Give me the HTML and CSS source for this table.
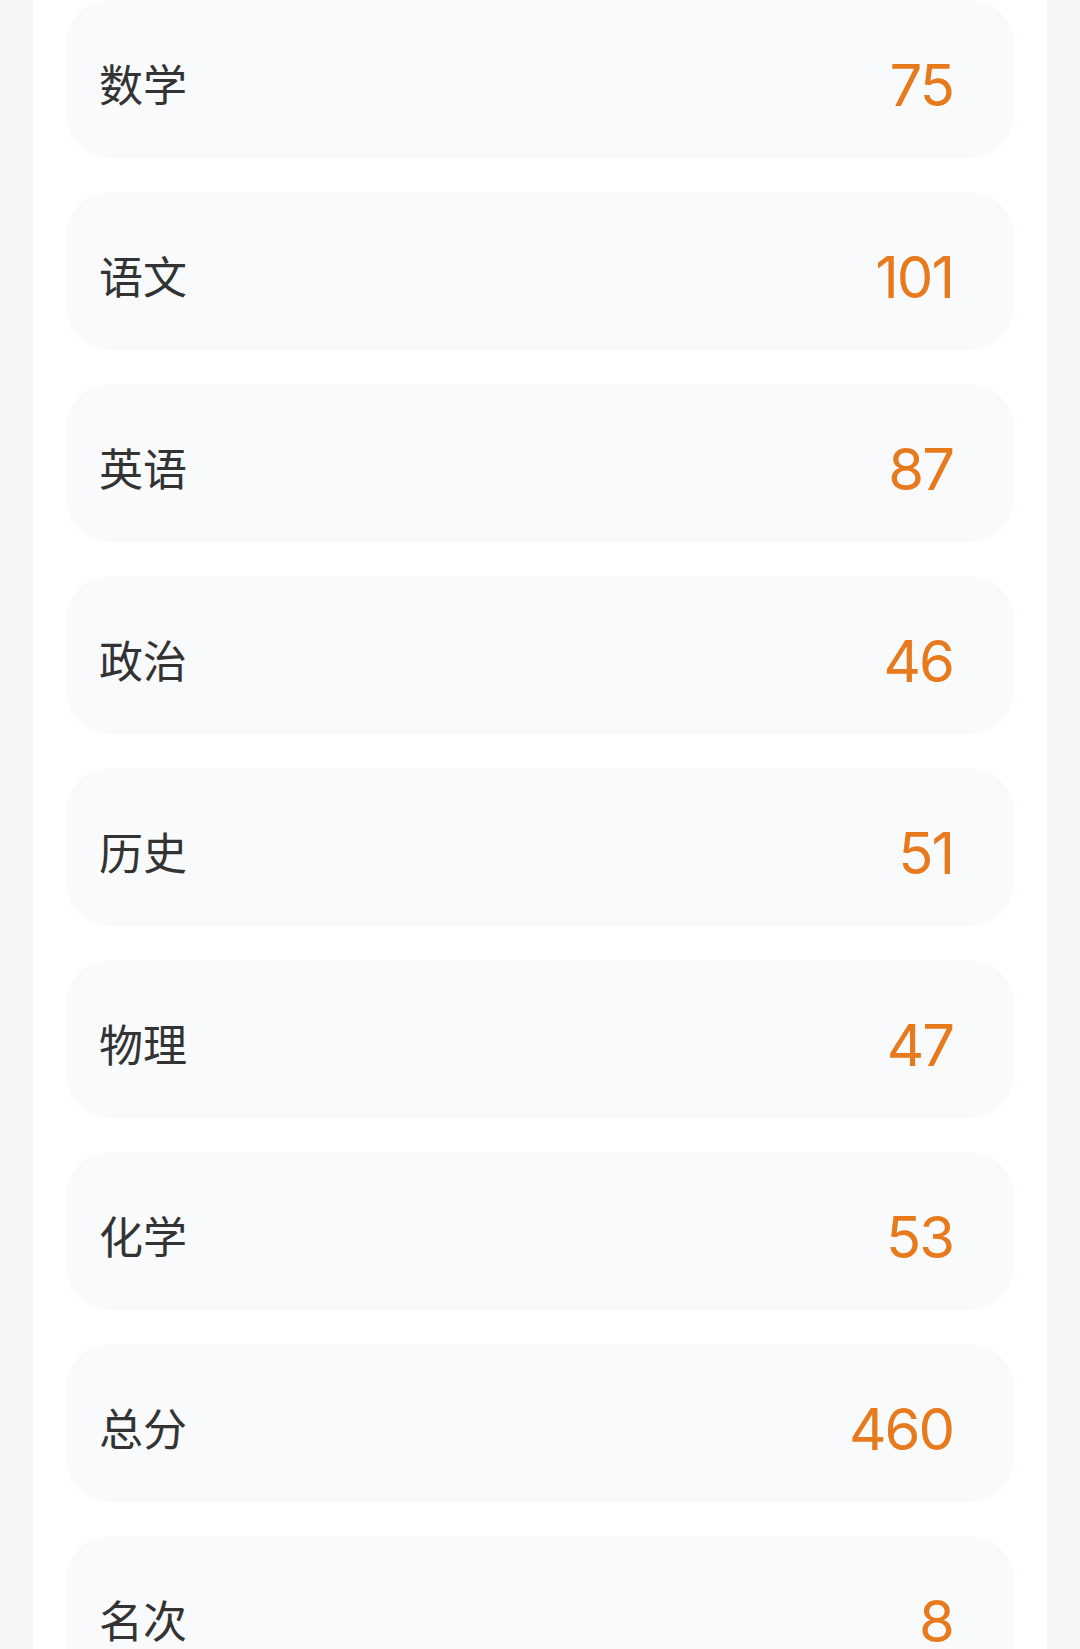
FILE: index.html
```html
<!DOCTYPE html>
<html lang="zh-CN">
<head>
<meta charset="utf-8">
<title>成绩</title>
<link rel="stylesheet" href="styles.css">
</head>
<body>
<div class="panel">
  <div class="row"><span class="label">数学</span><span class="score">75</span></div>
  <div class="row"><span class="label">语文</span><span class="score">101</span></div>
  <div class="row"><span class="label">英语</span><span class="score">87</span></div>
  <div class="row"><span class="label">政治</span><span class="score">46</span></div>
  <div class="row"><span class="label">历史</span><span class="score">51</span></div>
  <div class="row"><span class="label">物理</span><span class="score">47</span></div>
  <div class="row"><span class="label">化学</span><span class="score">53</span></div>
  <div class="row"><span class="label">总分</span><span class="score">460</span></div>
  <div class="row"><span class="label">名次</span><span class="score">8</span></div>
</div>
</body>
</html>
```
FILE: styles.css
```css
html, body {
  margin: 0;
  padding: 0;
  background: #f5f5f5;
}
body {
  font-family: "Noto Sans CJK SC", "Noto Sans", sans-serif;
}
.panel {
  margin: 0 33px;
  background: #ffffff;
  padding: 0 33px 40px;
  display: flex;
  flex-direction: column;
  gap: 34px;
  min-height: 1649px;
  box-sizing: border-box;
}
.row {
  height: 158px;
  box-sizing: border-box;
  padding: 12px 61px 0 33px;
  background: #f8fafb;
  border-radius: 44px;
  display: flex;
  align-items: center;
  justify-content: space-between;
  flex-shrink: 0;
}
.label {
  font-size: 44px;
  color: #333333;
  line-height: 1;
  margin-bottom: 4px;
}
.score {
  font-family: Inter, Roboto, sans-serif;
  font-size: 58px;
  font-weight: 380;
  font-variant-numeric: proportional-nums;
  letter-spacing: -2px;
  color: #e87a1e;
  line-height: 1;
}
```
